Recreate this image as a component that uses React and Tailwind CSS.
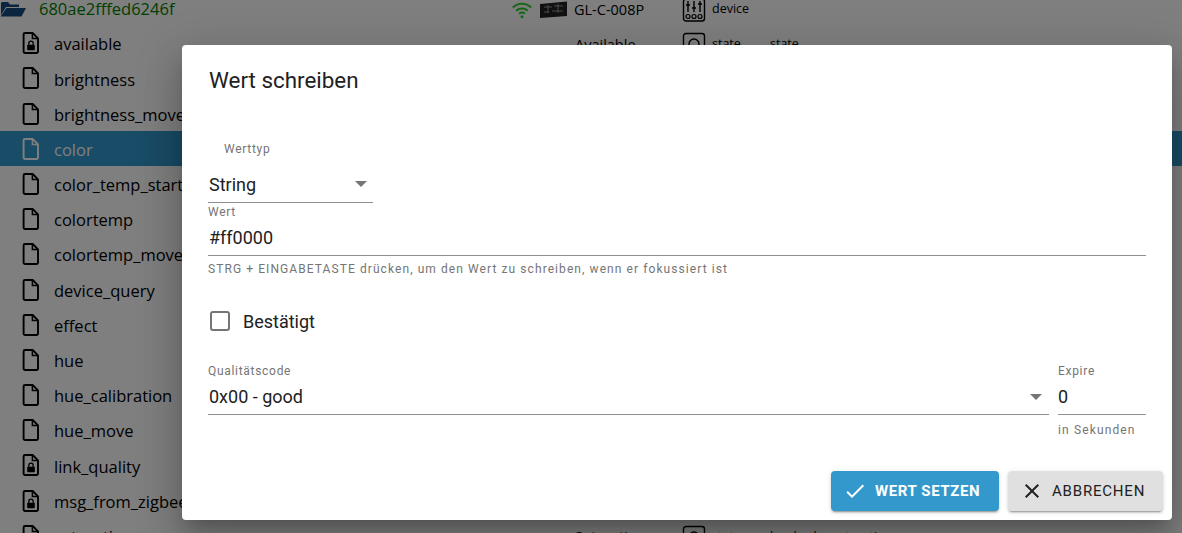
import React from "react";

const FileIcon = ({ lock, stroke = "#000" }) => (
  <svg width="24" height="24" viewBox="0 0 24 24" className="shrink-0">
    <path d="M6 2h7.7l5.3 5.3V20.6a1.4 1.4 0 0 1-1.4 1.4H6a1.4 1.4 0 0 1-1.4-1.4V3.4A1.4 1.4 0 0 1 6 2z" fill="none" stroke={stroke} strokeWidth="1.9" strokeLinejoin="round" />
    <path d="M13.4 2.2v5.4h5.4" fill="none" stroke={stroke} strokeWidth="1.5" />
    {lock && (
      <>
        <path d="M9.8 14v-1.6a2.2 2.2 0 0 1 4.4 0V14" fill="none" stroke={stroke} strokeWidth="1.3" />
        <rect x="8.2" y="13.8" width="7.6" height="5.4" rx="0.8" fill={stroke} />
      </>
    )}
  </svg>
);

const rows = [
  { n: "available", lock: true, name: "Available", role: true },
  { n: "brightness" },
  { n: "brightness_move" },
  { n: "color", selected: true },
  { n: "color_temp_start" },
  { n: "colortemp" },
  { n: "colortemp_move" },
  { n: "device_query" },
  { n: "effect" },
  { n: "hue" },
  { n: "hue_calibration" },
  { n: "hue_move" },
  { n: "link_quality", lock: true },
  { n: "msg_from_zigbee", lock: true },
  { n: "saturation", name: "Saturation", role: true, sat: true },
];

const Row = ({ r }) => (
  <div className={`flex h-[35.2px] items-center ${r.selected ? "bg-[#3399cc] text-white" : "text-black"}`}>
    <div className="flex w-[575px] items-center gap-[11px] pl-[19px]">
      <FileIcon lock={r.lock} stroke={r.selected ? "#ffffff" : "#000000"} />
      <span className="pt-[3px] text-[16.5px]">{r.n}</span>
    </div>
    {r.role && <span className="w-[107px] pt-[3px] text-[14.5px]">{r.name}</span>}
    {r.role && (
      <div className="flex items-center gap-[6px] text-[12.5px]">
        <svg width="24" height="24" viewBox="0 0 24 24" className="translate-y-px">
          <rect x="1.5" y="1.5" width="21" height="21" rx="2.5" fill="none" stroke="#000" strokeWidth="1.4" />
          <circle cx="12" cy="12" r="5" fill="none" stroke="#000" strokeWidth="1.4" />
        </svg>
        <span className="w-[52px] pt-[3px]">state</span>
        <span className="pt-[3px]">{r.sat ? "level.color.saturation" : "state"}</span>
      </div>
    )}
  </div>
);

const Label = ({ className = "", children }) => (
  <div className={`text-xs leading-[14px] tracking-[0.7px] text-[#757575] ${className}`}>{children}</div>
);

const Caret = () => (
  <span className="h-0 w-0 border-x-[6px] border-t-[6px] border-x-transparent border-t-[#757575]" />
);

export default function App() {
  return (
    <div className="relative h-[533px] w-[1182px] overflow-hidden bg-white font-['Open_Sans',sans-serif]">
      <div className="-mt-[9.6px]">
        <div className="flex h-[35.2px] items-center pt-[3px]">
          <div className="flex w-[512px] items-center gap-[13px]">
            <svg width="26" height="20" viewBox="0 0 26 20" className="shrink-0">
              <path d="M2 2h6l2 2.5h9v2.5H6L1 15V3z" fill="#164b7c" />
              <path d="M6.5 8H26l-4.5 8.5H0.5z" fill="#164b7c" />
            </svg>
            <span className="text-[16.5px] text-[#008000]">680ae2fffed6246f</span>
          </div>
          <svg width="20" height="18" viewBox="0 0 24 20" className="shrink-0">
            <path d="M1 7a16 16 0 0 1 22 0M5 11a10.5 10.5 0 0 1 14 0M8.5 14.5a5.5 5.5 0 0 1 7 0" fill="none" stroke="#32cd32" strokeWidth="2.4" />
            <circle cx="12" cy="18" r="1.8" fill="#32cd32" />
          </svg>
          <svg width="29" height="18" viewBox="0 0 29 18" className="ml-[7px] shrink-0">
            <path d="M1 3 28 0.5V15L1 17z" fill="#222" />
            <path d="M5 6h8M15 5h9M5 11h5M13 10h11M9 4v8M19 3v9" stroke="#999" strokeWidth="1" />
          </svg>
          <span className="ml-[6px] w-[108px] text-[14.5px]">GL-C-008P</span>
          <svg width="24" height="24" viewBox="0 0 24 24" className="shrink-0">
            <rect x="1.5" y="1" width="21" height="22" rx="2.5" fill="none" stroke="#000" strokeWidth="1.4" />
            <path d="M6 3v11M12 3v11M18 3v11M4 7h4M10 10h4M16 6h4" fill="none" stroke="#000" strokeWidth="1.4" />
            <circle cx="6" cy="18.5" r="2" fill="none" stroke="#000" strokeWidth="1.2" />
            <circle cx="12" cy="18.5" r="2" fill="none" stroke="#000" strokeWidth="1.2" />
            <circle cx="18" cy="18.5" r="2" fill="none" stroke="#000" strokeWidth="1.2" />
          </svg>
          <span className="ml-[6px] text-[12.5px]">device</span>
        </div>
        {rows.map((r) => (
          <Row key={r.n} r={r} />
        ))}
      </div>

      <div className="absolute inset-0 bg-black/50" />

      <div className="absolute left-[182px] top-[45px] flex h-[475px] w-[990px] flex-col rounded bg-white font-['Roboto',sans-serif] text-[#212121] shadow-[0_11px_15px_-7px_rgba(0,0,0,0.2),0_24px_38px_3px_rgba(0,0,0,0.14),0_9px_46px_8px_rgba(0,0,0,0.12)]">
        <h2 className="px-[27px] pt-[20px] text-[22.4px] leading-[30px] font-normal">Wert schreiben</h2>

        <div className="flex flex-1 flex-col px-[26px]">
          <div className="mt-[47px] w-[165px]">
            <Label className="pl-[16px]">Werttyp</Label>
            <div className="mt-[15px] flex h-[32px] items-center justify-between border-b border-[#8f8f8f] pb-[5px] pl-px pr-[6px]">
              <span className="text-[18px]">String</span>
              <Caret />
            </div>
          </div>

          <Label className="mt-[2px]">Wert</Label>
          <div className="mt-[6px] flex h-[31px] items-center border-b border-[#8f8f8f] pb-[6px] pl-px text-[18px]">#ff0000</div>
          <div className="mt-[6px] text-xs leading-[14px] tracking-[1.08px] text-[#757575]">
            STRG + EINGABETASTE drücken, um den Wert zu schreiben, wenn er fokussiert ist
          </div>

          <label className="mt-[33px] flex h-[24px] items-center gap-[13px] pl-[2px]">
            <span className="h-[20px] w-[20px] rounded-[3px] border-2 border-[#757575]" />
            <span className="text-[18px]">Bestätigt</span>
          </label>

          <div className="mt-[31px] flex gap-[9px]">
            <div className="flex-1">
              <Label>Qualitätscode</Label>
              <div className="mt-[5px] flex h-[32px] items-center justify-between border-b border-[#8f8f8f] pb-[4px] pl-px pr-[7px]">
                <span className="text-[18px]">0x00 - good</span>
                <Caret />
              </div>
            </div>
            <div className="w-[88px]">
              <Label>Expire</Label>
              <div className="mt-[5px] flex h-[32px] items-center border-b border-[#8f8f8f] pb-[4px] text-[18px]">0</div>
              <Label className="mt-[8px] tracking-[1.14px]">in Sekunden</Label>
            </div>
          </div>
        </div>

        <div className="flex justify-end gap-[9px] pb-[9px] pr-[9px]">
          <button className="flex h-[40px] w-[168px] items-center gap-[8px] rounded bg-[#3399cc] pl-[12px] text-[15px] font-bold tracking-[0.6px] text-white shadow-[0_3px_1px_-2px_rgba(0,0,0,0.2),0_2px_2px_0_rgba(0,0,0,0.14),0_1px_5px_0_rgba(0,0,0,0.12)]">
            <svg width="24" height="24" viewBox="0 0 24 24" fill="#fff"><path d="M9 16.17 4.83 12l-1.42 1.41L9 19 21 7l-1.41-1.41z" /></svg>
            WERT SETZEN
          </button>
          <button className="flex h-[40px] w-[155px] items-center gap-[8px] rounded bg-[#e0e0e0] pl-[12px] text-[15px] font-normal tracking-[0.8px] text-[#212121] shadow-[0_3px_1px_-2px_rgba(0,0,0,0.2),0_2px_2px_0_rgba(0,0,0,0.14),0_1px_5px_0_rgba(0,0,0,0.12)]">
            <svg width="24" height="24" viewBox="0 0 24 24" fill="#212121"><path d="M19 6.41 17.59 5 12 10.59 6.41 5 5 6.41 10.59 12 5 17.59 6.41 19 12 13.41 17.59 19 19 17.59 13.41 12z" /></svg>
            ABBRECHEN
          </button>
        </div>
      </div>
    </div>
  );
}
